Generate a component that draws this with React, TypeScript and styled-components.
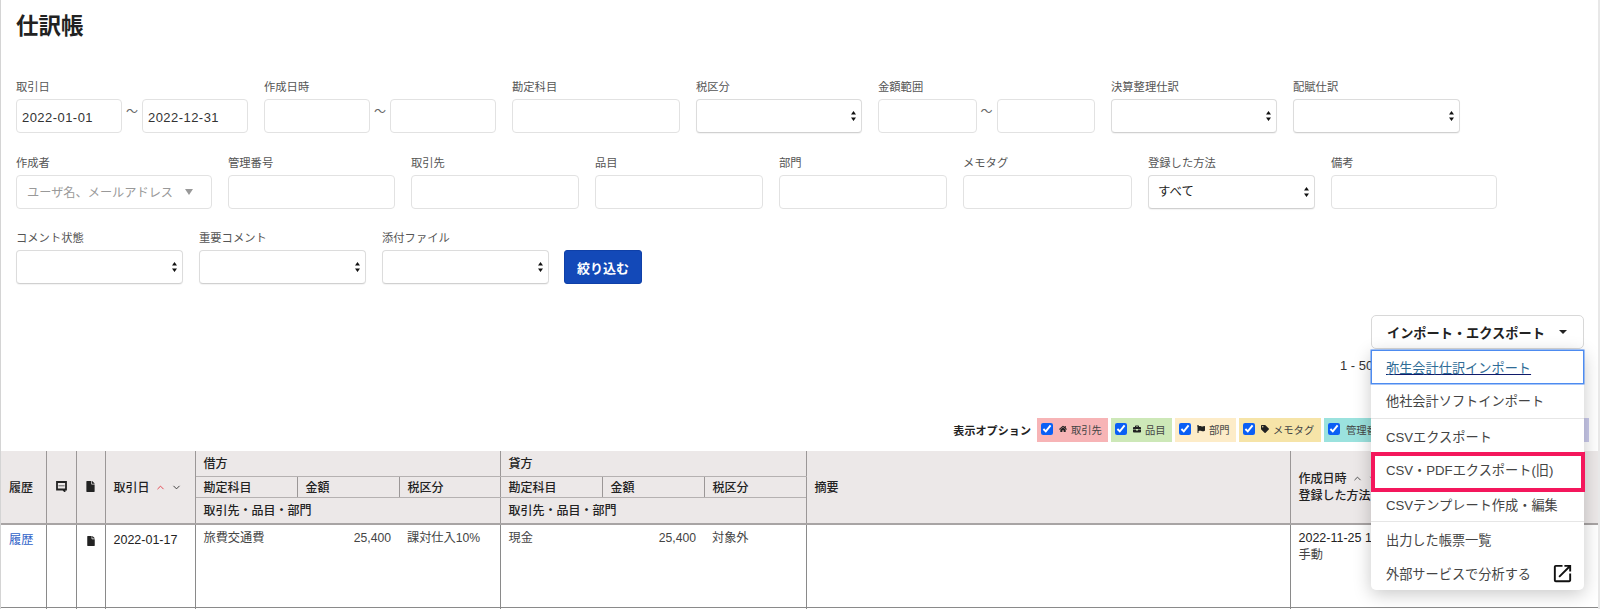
import React from "react";
import styled, { createGlobalStyle } from "styled-components";
import { FaHome, FaBriefcase, FaFlag, FaTag, FaFile } from "react-icons/fa";
import { MdOpenInNew } from "react-icons/md";
import { ChevronUp, ChevronDown } from "lucide-react";

const Global = createGlobalStyle`
  html, body { margin: 0; padding: 0; background: #fff; overflow: hidden; }
  body { font-family: "Liberation Sans", "Noto Sans CJK JP", sans-serif; color: #222; }
  * { box-sizing: border-box; }
`;

const Page = styled.div`
  position: relative;
  width: 1600px;
  height: 609px;
  overflow: hidden;
  border-left: 1px solid #d4d4d4;
  border-right: 2px solid #e8e8e8;
`;
const Title = styled.h1`
  margin: 0;
  padding: 13px 15px 0;
  height: 76px;
  font-size: 22.5px;
  line-height: 28px;
  font-weight: 700;
  color: #222;
`;
const Filters = styled.form`
  display: flex;
  flex-direction: column;
  gap: 18.5px;
  padding: 0 15px;
`;
const FilterRow = styled.div`
  display: flex;
  gap: 16px;
`;
const Field = styled.div<{ $width: number }>`
  width: ${(p) => p.$width}px;
  flex: none;
`;
const FieldLabel = styled.label`
  display: block;
  height: 20px;
  margin-bottom: 3px;
  padding-top: 1px;
  font-size: 11.3px;
  line-height: 20px;
  color: #555;
`;
const RangeRow = styled.div`
  display: flex;
  align-items: center;
`;
const Tilde = styled.span`
  flex: none;
  width: 20px;
  text-align: center;
  font-size: 12px;
  line-height: 26px;
  height: 34px;
  color: #666;
`;
const TextInput = styled.input`
  display: block;
  width: 100%;
  height: 34px;
  padding: 2px 5px 0;
  border: 1px solid #e2e2e2;
  border-radius: 4px;
  background: #fff;
  font: 13px "Liberation Sans", "Noto Sans CJK JP", sans-serif;
  letter-spacing: 0.45px;
  color: #333;
`;
const SelectWrap = styled.div`
  position: relative;
  height: 34px;
`;
const NativeSelect = styled.select`
  display: block;
  width: 100%;
  height: 34px;
  appearance: none;
  padding: 0 20px 0 9px;
  border: 1px solid #dcdcdc;
  border-bottom-color: #d0d0d0;
  border-radius: 4px;
  background: #fff;
  box-shadow: 0 1px 1px rgba(0, 0, 0, 0.05);
  font: 12.4px "Liberation Sans", "Noto Sans CJK JP", sans-serif;
  color: #222;
`;
const Arrows = styled.svg`
  position: absolute;
  top: 12px;
  right: 6px;
  width: 5px;
  height: 10px;
  pointer-events: none;
`;
const PersonPicker = styled.div`
  display: flex;
  align-items: center;
  height: 34px;
  padding: 0 18px 0 10px;
  justify-content: space-between;
  border: 1px solid #e2e2e2;
  border-radius: 4px;
  font-size: 12.2px;
  color: #999;
`;
const PickerCaret = styled.span`
  width: 0;
  height: 0;
  border-left: 4px solid transparent;
  border-right: 4px solid transparent;
  border-top: 6px solid #999;
`;
const SubmitButton = styled.button`
  flex: none;
  align-self: flex-end;
  width: 78px;
  height: 34px;
  margin-left: -1px;
  border: 1px solid #0f40a8;
  border-radius: 3px;
  background: #1349b8;
  color: #fff;
  font: 700 13px "Liberation Sans", "Noto Sans CJK JP", sans-serif;
`;

const ExportBar = styled.div`
  display: flex;
  justify-content: flex-end;
  padding: 31px 14px 0 0;
`;
const ExportWrap = styled.div`
  position: relative;
  width: 213px;
`;
const ExportToggle = styled.button`
  display: flex;
  align-items: center;
  justify-content: space-between;
  width: 100%;
  height: 34px;
  padding: 0 15px;
  border: 1px solid #d8d8d8;
  border-radius: 5px;
  background: #fff;
  color: #222;
  font: 700 13.2px "Liberation Sans", "Noto Sans CJK JP", sans-serif;
`;
const ToggleCaret = styled.span`
  width: 0;
  height: 0;
  border-left: 4px solid transparent;
  border-right: 4px solid transparent;
  border-top: 4px solid #222;
  margin-right: 1px;
`;
const Menu = styled.ul`
  position: absolute;
  z-index: 5;
  top: 35px;
  left: 0;
  width: 213px;
  margin: 0;
  padding: 0;
  list-style: none;
  background: #fff;
  border-radius: 5px;
  box-shadow: 0 4px 18px rgba(0, 0, 0, 0.22);
`;
const MenuItem = styled.li<{ $focused?: boolean; $marked?: boolean; $up?: boolean }>`
  position: relative;
  display: flex;
  align-items: center;
  justify-content: space-between;
  height: 34px;
  padding: 0 10px ${(p) => (p.$up ? "2px" : "0")} 15px;
  font-size: 13.2px;
  color: #444;
  ${(p) =>
    p.$focused &&
    `
    border: 1px solid #4d8bf0;
    box-shadow: 0 0 0 0.5px #4d8bf0;
    color: #2f6c96;
    padding-left: 14px;
    text-decoration: underline;
    text-decoration-color: #101a6a;
  `}
  ${(p) =>
    p.$marked &&
    `
    &::after {
      content: "";
      position: absolute;
      z-index: 2;
      inset: -1px -1px -5px 0;
      border: 4px solid #f4175c;
      pointer-events: none;
    }
  `}
`;
const MenuDivider = styled.li`
  height: 1px;
  background: #e6e6e6;
`;
const OutIcon = styled(MdOpenInNew)`
  width: 23px;
  height: 23px;
  color: #111;
`;

const Pagination = styled.div`
  height: 36px;
  padding: 8px 0 0 1339px;
  font-size: 13px;
  line-height: 18px;
  color: #333;
  white-space: nowrap;
`;
const Options = styled.div`
  display: flex;
  justify-content: flex-end;
  align-items: center;
  gap: 3px;
  height: 24px;
  margin-top: 33px;
  padding-right: 9px;
`;
const OptionsTitle = styled.span`
  margin-right: 3px;
  font-size: 11px;
  font-weight: 700;
  letter-spacing: 0.1px;
  color: #222;
`;
const Chip = styled.label<{ $bg: string; $width: number }>`
  display: flex;
  flex: none;
  align-items: center;
  gap: 4px;
  width: ${(p) => p.$width}px;
  height: 24px;
  padding: 0 0 2px 4px;
  background: ${(p) => p.$bg};
  font-size: 10.3px;
  color: #444;
  white-space: nowrap;
  overflow: hidden;
  svg { flex: none; width: 8px; height: 8px; color: #222; }
`;
const ChipCheck = styled.input`
  flex: none;
  width: 12px;
  height: 12px;
  margin: 0 2px 0 0;
  accent-color: #0a5ff5;
`;

const Table = styled.table`
  width: 1597px;
  margin-top: 9px;
  border-collapse: collapse;
  table-layout: fixed;
  font-size: 12px;
`;
const Head = styled.th<{ $h?: number; $sub?: boolean }>`
  height: ${(p) => p.$h ?? 25}px;
  padding: 3px 8px 0;
  background: #ece8e8;
  border: 1px solid #9b9797;
  border-top: 0;
  border-bottom: ${(p) => (p.$sub ? "1px solid #b5b1b1" : "2px solid #a8a4a4")};
  text-align: left;
  font-size: 12px;
  font-weight: 500;
  line-height: 17.5px;
  color: #222;
  white-space: nowrap;
  &:first-child { border-left: 0; }
  &:last-child { border-right: 0; }
`;
const HeadCenter = styled(Head)`
  text-align: center;
  padding: 0;
  svg { width: 11px; height: 11px; display: block; margin: 0 auto; color: #222; }
`;
const SortUp = styled(ChevronUp)<{ $active?: boolean }>`
  width: 11px;
  height: 11px;
  margin: 0 2px 0 5px;
  vertical-align: -1px;
  color: ${(p) => (p.$active ? "#e23b46" : "#444")};
`;
const SortDown = styled(ChevronDown)`
  width: 11px;
  height: 11px;
  margin-left: 3px;
  vertical-align: -1px;
  color: #333;
`;
const Cell = styled.td<{ $right?: boolean; $open?: boolean }>`
  height: 84px;
  padding: 5px 8px 0;
  vertical-align: top;
  border-left: ${(p) => (p.$open ? "0" : "1px solid #8a8a8a")};
  border-bottom: 1px solid #8a8a8a;
  text-align: ${(p) => (p.$right ? "right" : "left")};
  font-size: 12.2px;
  line-height: 17px;
  color: #444;
  white-space: nowrap;
  &:first-child { border-left: 0; }
`;
const CenterCell = styled(Cell)`
  padding: 9px 0 0;
  text-align: center;
  svg { width: 10px; height: 10px; color: #222; }
`;
const HistoryLink = styled.a`
  display: block;
  padding-top: 2px;
  color: #2f62c8;
  text-decoration: none;
`;
const DateText = styled.span`
  display: block;
  padding-top: 2px;
  font-size: 12.5px;
  color: #222;
`;
const CreatedAt = styled.span`
  font-size: 12.5px;
  color: #222;
`;
const SpacerRow = styled.td`
  height: 40px;
  border-left: 1px solid #8a8a8a;
  &:first-child { border-left: 0; }
`;

const CommentGlyph = () => (
  <svg viewBox="0 0 11 11">
    <path d="M1 1 H10 V8.5 H8.5 V10 L7 8.5 H1 Z" fill="none" stroke="#222" strokeWidth="1.8" />
    <rect x="2.4" y="4" width="6.2" height="1.4" fill="#888" />
  </svg>
);

const SelectField = ({ value }: { value?: string }) => (
  <SelectWrap>
    <NativeSelect defaultValue={value ?? ""}>
      <option value={value ?? ""}>{value ?? ""}</option>
    </NativeSelect>
    <Arrows viewBox="0 0 5 10">
      <path d="M2.5 0 L5 3.6 H0 Z M0 6.4 H5 L2.5 10 Z" fill="#111" />
    </Arrows>
  </SelectWrap>
);

const Range = ({ from, to, w }: { from?: string; to?: string; w: number }) => (
  <RangeRow>
    <TextInput style={{ width: w }} defaultValue={from} />
    <Tilde>〜</Tilde>
    <TextInput style={{ width: w }} defaultValue={to} />
  </RangeRow>
);

const chips = [
  { bg: "#f7b4b6", w: 71, icon: <FaHome />, text: "取引先" },
  { bg: "#cde8b8", w: 61, icon: <FaBriefcase />, text: "品目" },
  { bg: "#fdecc8", w: 61, icon: <FaFlag />, text: "部門" },
  { bg: "#f6e4a8", w: 82, icon: <FaTag />, text: "メモタグ" },
  { bg: "#9be2de", w: 70, icon: null, text: "管理番号" },
  { bg: "#c9c9ea", w: 192, icon: null, text: "" },
];

export default function App() {
  return (
    <Page>
      <Global />
      <Title>仕訳帳</Title>
      <Filters>
        <FilterRow>
          <Field $width={232}>
            <FieldLabel>取引日</FieldLabel>
            <Range from="2022-01-01" to="2022-12-31" w={106} />
          </Field>
          <Field $width={232}>
            <FieldLabel>作成日時</FieldLabel>
            <Range w={106} />
          </Field>
          <Field $width={168}>
            <FieldLabel>勘定科目</FieldLabel>
            <TextInput />
          </Field>
          <Field $width={166}>
            <FieldLabel>税区分</FieldLabel>
            <SelectField />
          </Field>
          <Field $width={217}>
            <FieldLabel>金額範囲</FieldLabel>
            <Range w={98.5} />
          </Field>
          <Field $width={166}>
            <FieldLabel>決算整理仕訳</FieldLabel>
            <SelectField />
          </Field>
          <Field $width={167}>
            <FieldLabel>配賦仕訳</FieldLabel>
            <SelectField />
          </Field>
        </FilterRow>
        <FilterRow>
          <Field $width={196}>
            <FieldLabel>作成者</FieldLabel>
            <PersonPicker>
              ユーザ名、メールアドレス
              <PickerCaret />
            </PersonPicker>
          </Field>
          <Field $width={167}>
            <FieldLabel>管理番号</FieldLabel>
            <TextInput />
          </Field>
          <Field $width={168}>
            <FieldLabel>取引先</FieldLabel>
            <TextInput />
          </Field>
          <Field $width={168}>
            <FieldLabel>品目</FieldLabel>
            <TextInput />
          </Field>
          <Field $width={168}>
            <FieldLabel>部門</FieldLabel>
            <TextInput />
          </Field>
          <Field $width={169}>
            <FieldLabel>メモタグ</FieldLabel>
            <TextInput />
          </Field>
          <Field $width={167}>
            <FieldLabel>登録した方法</FieldLabel>
            <SelectField value="すべて" />
          </Field>
          <Field $width={166}>
            <FieldLabel>備考</FieldLabel>
            <TextInput />
          </Field>
        </FilterRow>
        <FilterRow>
          <Field $width={167}>
            <FieldLabel>コメント状態</FieldLabel>
            <SelectField />
          </Field>
          <Field $width={167}>
            <FieldLabel>重要コメント</FieldLabel>
            <SelectField />
          </Field>
          <Field $width={167}>
            <FieldLabel>添付ファイル</FieldLabel>
            <SelectField />
          </Field>
          <SubmitButton type="button">絞り込む</SubmitButton>
        </FilterRow>
      </Filters>

      <ExportBar>
        <ExportWrap>
          <ExportToggle type="button">
            インポート・エクスポート
            <ToggleCaret />
          </ExportToggle>
          <Menu>
            <MenuItem $focused>弥生会計仕訳インポート</MenuItem>
            <MenuItem $up>他社会計ソフトインポート</MenuItem>
            <MenuDivider />
            <MenuItem>CSVエクスポート</MenuItem>
            <MenuItem $marked $up>CSV・PDFエクスポート(旧)</MenuItem>
            <MenuItem>CSVテンプレート作成・編集</MenuItem>
            <MenuDivider />
            <MenuItem>出力した帳票一覧</MenuItem>
            <MenuItem>
              外部サービスで分析する
              <OutIcon />
            </MenuItem>
          </Menu>
        </ExportWrap>
      </ExportBar>
      <Pagination>1 - 50</Pagination>
      <Options>
        <OptionsTitle>表示オプション</OptionsTitle>
        {chips.map((c, i) => (
          <Chip key={i} $bg={c.bg} $width={c.w}>
            <ChipCheck type="checkbox" defaultChecked readOnly />
            {c.icon}
            {c.text}
          </Chip>
        ))}
      </Options>

      <Table>
        <colgroup>
          <col style={{ width: 45 }} />
          <col style={{ width: 30 }} />
          <col style={{ width: 29 }} />
          <col style={{ width: 90 }} />
          <col style={{ width: 102 }} />
          <col style={{ width: 102 }} />
          <col style={{ width: 101 }} />
          <col style={{ width: 102 }} />
          <col style={{ width: 102 }} />
          <col style={{ width: 102 }} />
          <col style={{ width: 484 }} />
          <col />
        </colgroup>
        <thead>
          <tr>
            <Head rowSpan={3}>履歴</Head>
            <HeadCenter rowSpan={3}>
              <CommentGlyph />
            </HeadCenter>
            <HeadCenter rowSpan={3}>
              <FaFile />
            </HeadCenter>
            <Head rowSpan={3}>
              取引日
              <SortUp $active />
              <SortDown />
            </Head>
            <Head colSpan={3} $sub>借方</Head>
            <Head colSpan={3} $sub>貸方</Head>
            <Head rowSpan={3}>摘要</Head>
            <Head rowSpan={3}>
              作成日時
              <SortUp />
              <SortDown />
              <br />
              登録した方法
            </Head>
          </tr>
          <tr>
            <Head $h={21} $sub>勘定科目</Head>
            <Head $h={21} $sub>金額</Head>
            <Head $h={21} $sub>税区分</Head>
            <Head $h={21} $sub>勘定科目</Head>
            <Head $h={21} $sub>金額</Head>
            <Head $h={21} $sub>税区分</Head>
          </tr>
          <tr>
            <Head colSpan={3} $h={26}>取引先・品目・部門</Head>
            <Head colSpan={3} $h={26}>取引先・品目・部門</Head>
          </tr>
        </thead>
        <tbody>
          <tr>
            <Cell>
              <HistoryLink href="#">履歴</HistoryLink>
            </Cell>
            <Cell />
            <CenterCell>
              <FaFile />
            </CenterCell>
            <Cell>
              <DateText>2022-01-17</DateText>
            </Cell>
            <Cell>旅費交通費</Cell>
            <Cell $right $open>25,400</Cell>
            <Cell $open>課対仕入10%</Cell>
            <Cell>現金</Cell>
            <Cell $right $open>25,400</Cell>
            <Cell $open>対象外</Cell>
            <Cell />
            <Cell>
              <CreatedAt>2022-11-25 10:00</CreatedAt>
              <br />
              手動
            </Cell>
          </tr>
          <tr>
            <SpacerRow />
            <SpacerRow />
            <SpacerRow />
            <SpacerRow />
            <SpacerRow colSpan={3} />
            <SpacerRow colSpan={3} />
            <SpacerRow />
            <SpacerRow />
          </tr>
        </tbody>
      </Table>
    </Page>
  );
}
